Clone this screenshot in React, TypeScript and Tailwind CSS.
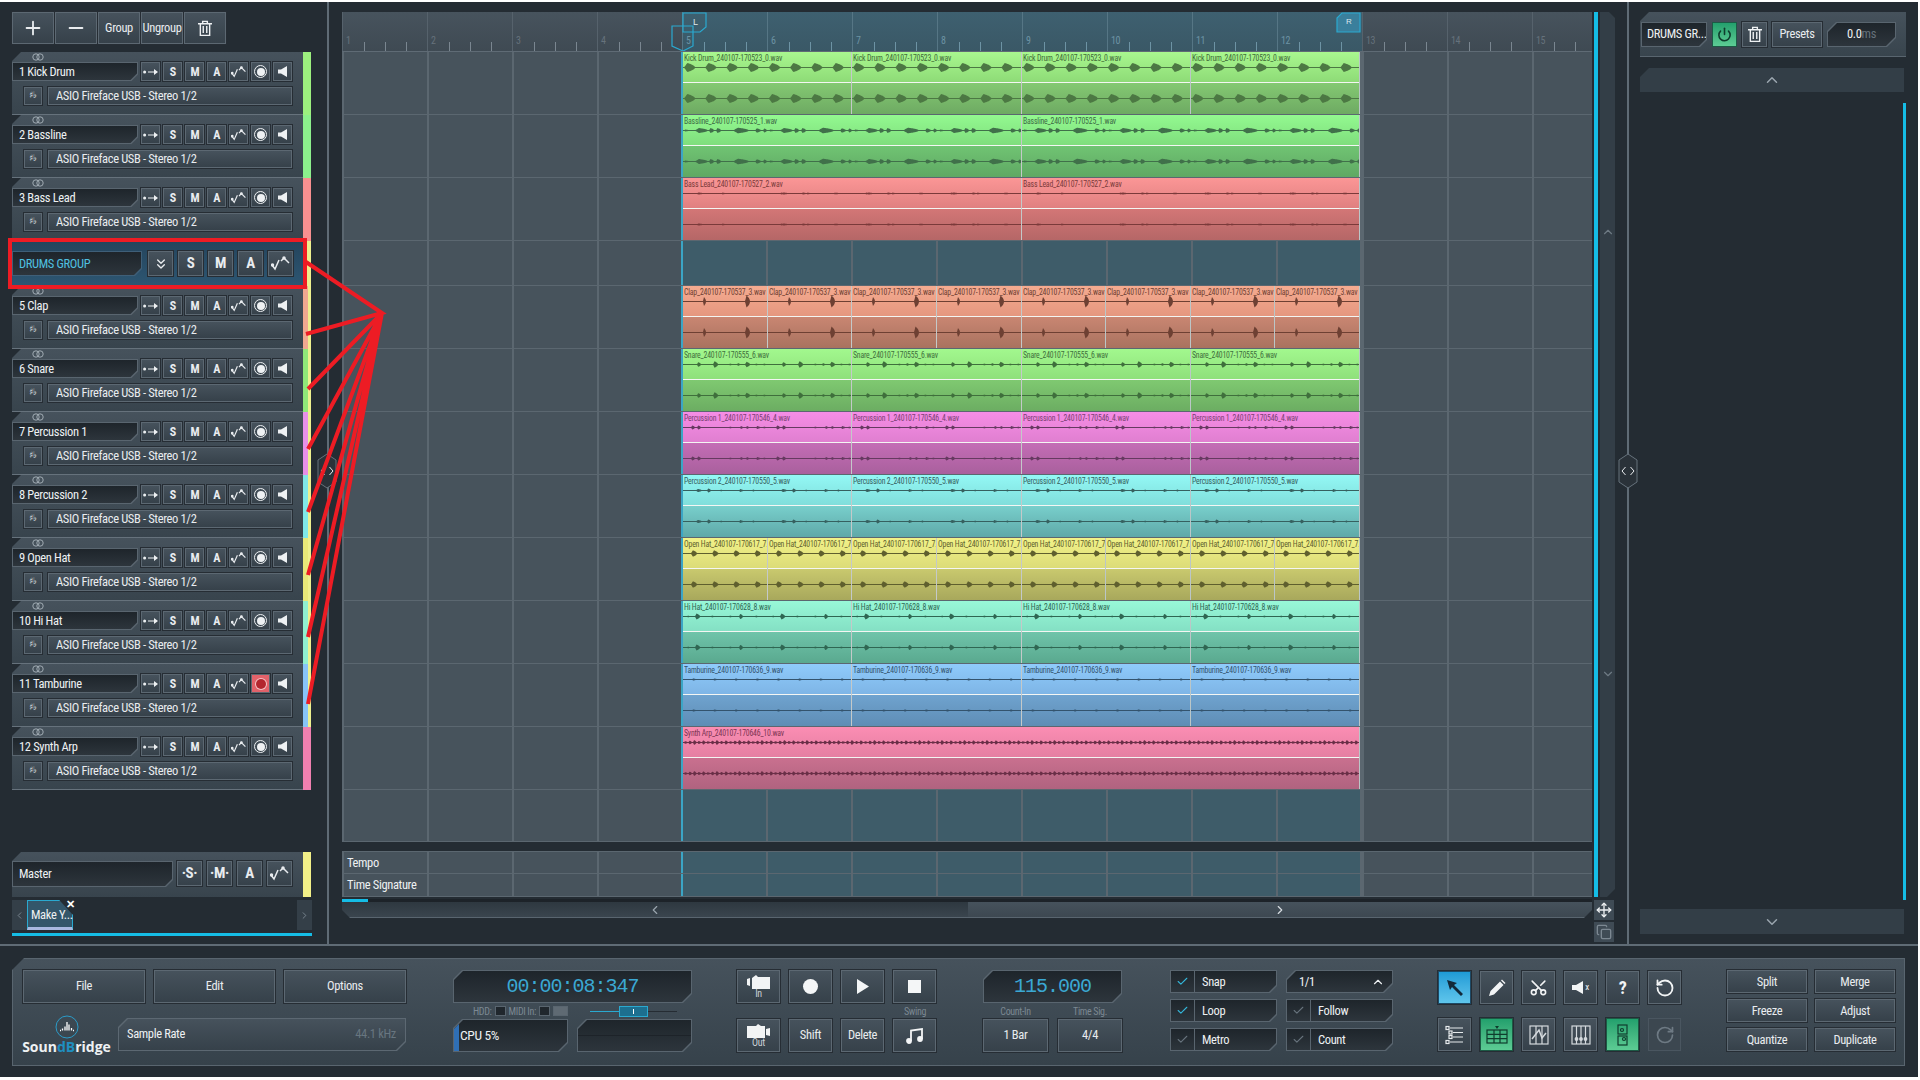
import { ReactNode } from "react";
import { Check, ChevronLeft, ChevronRight, ChevronUp, ChevronDown, ChevronsDown, Copy, Minus, Move, Plus, Power, RotateCcw, RotateCw, Scissors } from "lucide-react";

const CUT_BR = "[clip-path:polygon(0_0,100%_0,100%_calc(100%-7px),calc(100%-7px)_100%,0_100%)]";
const CUT_TL = "[clip-path:polygon(9px_0,100%_0,100%_100%,0_100%,0_9px)]";
const CUT_BOTH = "[clip-path:polygon(9px_0,100%_0,100%_calc(100%-9px),calc(100%-9px)_100%,0_100%,0_9px)]";
const GRID = "bg-[linear-gradient(to_right,#5b6770_2px,transparent_2px)] bg-[length:85px_100%]";
const BTN = "flex items-center justify-center border border-[#5c6872] bg-linear-to-b from-[#46525c] to-[#36414a] text-[#e9ecef] shadow-[0_0_0_1px_#262d34]";
const DARK = "bg-linear-to-b from-[#1e252b] to-[#2d353c]";

type Hit = [number, number, number];
type ClipSet = {
  name: string;
  count: number;
  period: number;
  hits: Hit[];
  wave: string;
  text: string;
  top: string;
  bottom: string;
};

function wavePath(width: number, cy: number, hits: Hit[], period: number) {
  const all: Hit[] = [];
  for (let k = 0; k * period < width; k++) {
    hits.forEach(([p, a, w]) => all.push([p + k * period, a, w]));
  }
  const up: string[] = [];
  const down: string[] = [];
  for (let x = 0; x <= width; x += 0.5) {
    let env = 0.45;
    all.forEach(([p, a, w]) => {
      const d = x - p;
      if (d < 0 || d > w) return;
      const peak = w * 0.3;
      const v = d < peak ? d / peak : Math.sqrt(1 - (d - peak) / (w - peak));
      env = Math.max(env, a * v);
    });
    up.push(`${x},${(cy - env).toFixed(2)}`);
    down.unshift(`${x},${(cy + env).toFixed(2)}`);
  }
  return `M${up.join("L")}L${down.join("L")}Z`;
}

function synthHits(): Hit[] {
  const out: Hit[] = [];
  for (let i = 0; i < 150; i++) {
    out.push([i * 4.5 + 1, 1.4 + ((i * 7) % 5) * 0.25, 3.5]);
  }
  return out;
}

const TRACK_CLIPS: (ClipSet | null)[] = [
  { name: "Kick Drum_240107-170523_0.wav", count: 4, period: 21.2, hits: [[1, 4.5, 11]], wave: "#4c7843", text: "text-[#3f6a38]", top: "from-[#a9f88f] to-[#8edb77]", bottom: "from-[#84c972] to-[#6eaa63]" },
  { name: "Bassline_240107-170525_1.wav", count: 2, period: 85, hits: [[1, 1, 5], [12, 2.5, 13], [26, 2.5, 5], [33, 2.5, 5], [50, 2.8, 16], [72, 2.2, 6], [80, 2, 4]], wave: "#40704a", text: "text-[#3d6b45]", top: "from-[#93f990] to-[#7fde7d]", bottom: "from-[#70c473] to-[#5fa863]" },
  { name: "Bass Lead_240107-170527_2.wav", count: 2, period: 85, hits: [[13, 1, 8], [38, 0.9, 5], [96, 0.9, 8], [118, 1, 6], [150, 0.9, 7]], wave: "#7a3a3a", text: "text-[#7a3a3a]", top: "from-[#fb9696] to-[#e08080]", bottom: "from-[#d37676] to-[#b56767]" },
  null,
  { name: "Clap_240107-170537_3.wav", count: 8, period: 85, hits: [[20, 4.5, 3], [62, 6, 5]], wave: "#6e4033", text: "text-[#6e4033]", top: "from-[#f5ab90] to-[#e5977f]", bottom: "from-[#c98672] to-[#a9725f]" },
  { name: "Snare_240107-170555_6.wav", count: 4, period: 85, hits: [[14, 2.3, 4], [30, 3.2, 5], [46, 1, 3], [54, 1.4, 3], [62, 2.8, 5], [72, 1, 3], [80, 1, 3]], wave: "#3f6f3c", text: "text-[#3f6f3c]", top: "from-[#a2f88e] to-[#8fe07b]", bottom: "from-[#7fc971] to-[#6cad62]" },
  { name: "Percussion 1_240107-170546_4.wav", count: 4, period: 85, hits: [[8, 2, 4], [14, 2, 4], [46, 1, 3], [57, 1.5, 3], [63, 1.5, 3], [73, 1.5, 4], [80, 1, 3]], wave: "#663a60", text: "text-[#7a3f72]", top: "from-[#f68de6] to-[#e07fd0]", bottom: "from-[#c46db6] to-[#a9609d]" },
  { name: "Percussion 2_240107-170550_5.wav", count: 4, period: 85, hits: [[13, 1.6, 6], [24, 2, 4], [37, 0.9, 3], [56, 1.5, 4], [69, 1.1, 3]], wave: "#36605f", text: "text-[#36605f]", top: "from-[#93f8f5] to-[#80dedb]", bottom: "from-[#78cfcc] to-[#5fa9a8]" },
  { name: "Open Hat_240107-170617_7.wav", count: 8, period: 21.2, hits: [[8, 3.2, 6]], wave: "#5f5f2e", text: "text-[#5f5f2e]", top: "from-[#f2f288] to-[#dcdc78]", bottom: "from-[#c9c96e] to-[#a8a85c]" },
  { name: "Hi Hat_240107-170628_8.wav", count: 4, period: 85, hits: [[4, 0.9, 3], [12, 3, 5], [28, 1, 3], [46, 1, 3], [56, 2.6, 4], [72, 1, 3]], wave: "#2f6652", text: "text-[#2f6652]", top: "from-[#98f8d8] to-[#84e0c4]", bottom: "from-[#6fc4aa] to-[#5aa98f]" },
  { name: "Tamburine_240107-170636_9.wav", count: 4, period: 21.2, hits: [[9, 1.1, 4]], wave: "#33536d", text: "text-[#33536d]", top: "from-[#8fcbfb] to-[#7eb5e6]", bottom: "from-[#6fa3cf] to-[#5f8db5]" },
  { name: "Synth Arp_240107-170646_10.wav", count: 1, period: 678, hits: synthHits(), wave: "#6a2f47", text: "text-[#7a3452]", top: "from-[#fb8db3] to-[#e57fa2]", bottom: "from-[#c9708f] to-[#b0637f]" },
];

const TRACKS = [
  { name: "1 Kick Drum", color: "bg-[#9cf07e]" },
  { name: "2 Bassline", color: "bg-[#8cf08c]" },
  { name: "3 Bass Lead", color: "bg-[#f89090]" },
  null,
  { name: "5 Clap", color: "bg-[#f0a890]", child: true },
  { name: "6 Snare", color: "bg-[#90e878]", child: true },
  { name: "7 Percussion 1", color: "bg-[#e890e8]", child: true },
  { name: "8 Percussion 2", color: "bg-[#80e8e8]", child: true },
  { name: "9 Open Hat", color: "bg-[#e8e878]", child: true },
  { name: "10 Hi Hat", color: "bg-[#90f0d0]", child: true },
  { name: "11 Tamburine", color: "bg-[#88c4f8]", child: true, armed: true },
  { name: "12 Synth Arp", color: "bg-[#f080b0]" },
];

function Cut({ cut, outer = "bg-[#59656f]", inner = DARK, className = "", children }: { cut: string; outer?: string; inner?: string; className?: string; children?: ReactNode }) {
  return (
    <div className={`${cut} ${outer} p-px ${className}`}>
      <div className={`${cut} ${inner} flex h-full w-full items-center`}>{children}</div>
    </div>
  );
}

function CurveIcon({ size = 16 }: { size?: number }) {
  return (
    <svg width={size} height={size * 0.75} viewBox="0 0 20 15" fill="none" stroke="#e9ecef" strokeWidth="1.5">
      <path d="M1 9l3 4 4-9" />
      <path d="M10 5l3-3 5 5" />
      <circle cx="1.5" cy="9" r="1" fill="#e9ecef" />
      <circle cx="13" cy="2" r="1" fill="#e9ecef" />
    </svg>
  );
}

function Trash({ size = 14 }: { size?: number }) {
  return (
    <svg width={size} height={size * 1.2} viewBox="0 0 12 14" fill="none" stroke="#eef1f3" strokeWidth="1.2">
      <path d="M0 3h12M4 3V1h4v2M2 3v10h8V3M4.5 5v6M7.5 5v6" />
    </svg>
  );
}

function LinkIcon() {
  return (
    <svg width="12" height="8" viewBox="0 0 12 8" fill="none" stroke="#aab4bc" strokeWidth="0.9">
      <circle cx="4" cy="4" r="3.2" />
      <circle cx="8" cy="4" r="3.2" />
    </svg>
  );
}

function SmallBtn({ children, className = "" }: { children: ReactNode; className?: string }) {
  return <div className={`${BTN} h-[19px] w-[19px] text-[12px] font-bold ${className}`}>{children}</div>;
}

function TrackHeader({ name, color, child, armed }: { name: string; color: string; child?: boolean; armed?: boolean }) {
  return (
    <div className="flex h-[63px]">
      <div className={`${CUT_TL} relative h-full w-[291px] border-b border-[#66727c] bg-linear-to-b from-[#46525c] to-[#38444d]`}>
        <div className="flex h-[10px] items-center pl-[20px]">
          <LinkIcon />
        </div>
        <div className="flex gap-[3px] pr-[11px]">
          <Cut cut={CUT_BR} className="h-[19px] w-[127px]">
            <span className="pl-[6px] pt-px text-[12.5px] text-[#eef1f3]">{name}</span>
          </Cut>
          <SmallBtn>
            <svg width="15" height="6" viewBox="0 0 15 6" fill="#eef1f3">
              <circle cx="1.6" cy="3" r="1.5" />
              <path d="M5 2.4h6V0l4 3-4 3V3.6H5z" />
            </svg>
          </SmallBtn>
          <SmallBtn>S</SmallBtn>
          <SmallBtn>M</SmallBtn>
          <SmallBtn>A</SmallBtn>
          <SmallBtn>
            <CurveIcon />
          </SmallBtn>
          {armed ? (
            <SmallBtn className="bg-none !bg-[#e2626a]">
              <span className="h-[10px] w-[10px] rounded-full bg-[#b3262e] ring-1 ring-[#f3c4c6]" />
            </SmallBtn>
          ) : (
            <SmallBtn>
              <span className="flex h-[13px] w-[13px] items-center justify-center rounded-full border border-[#eef1f3]">
                <span className="h-[8px] w-[8px] rounded-full bg-[#eef1f3]" />
              </span>
            </SmallBtn>
          )}
          <SmallBtn>
            <svg width="9" height="11" viewBox="0 0 9 11" fill="#eef1f3">
              <path d="M0 3.5h3L9 0v11L3 7.5H0z" />
            </svg>
          </SmallBtn>
        </div>
        <div className="mt-[6px] flex gap-[6px] pl-[12px] pr-[11px]">
          <div className={`${BTN} h-[18px] w-[18px] font-['DejaVu_Sans'] text-[9px] tracking-normal text-[#8f9aa3]`}>♯♭</div>
          <div className={`${BTN} h-[18px] flex-1 justify-start pl-[7px] text-[12.5px]`}>ASIO Fireface USB - Stereo 1/2</div>
        </div>
      </div>
      <div className="flex w-[8px]">
        <div className={`${color} h-full flex-1`} />
        {child && <div className="h-full w-[3px] bg-[#eef08e]" />}
      </div>
    </div>
  );
}

function GroupBtn({ children }: { children: ReactNode }) {
  return <div className={`${BTN} h-[25px] w-[25px] text-[15px] font-bold`}>{children}</div>;
}

function GroupHeader() {
  return (
    <div className="flex h-[45px]">
      <div className="h-full w-[291px] bg-linear-to-b from-[#24445c] to-[#2d5672] pt-[10px]">
        <div className="flex items-center gap-[6px]">
          <Cut cut={CUT_BR} outer="bg-[#3f5f78]" className="h-[25px] w-[130px]">
            <span className="pl-[6px] pt-px text-[12.5px] text-[#4fc0e0]">DRUMS GROUP</span>
          </Cut>
          <div className="flex gap-[5px]">
            <GroupBtn>
              <ChevronsDown size={16} />
            </GroupBtn>
            <GroupBtn>S</GroupBtn>
            <GroupBtn>M</GroupBtn>
            <GroupBtn>A</GroupBtn>
            <GroupBtn>
              <CurveIcon size={20} />
            </GroupBtn>
          </div>
        </div>
      </div>
      <div className="h-full w-[8px] bg-[#eef08e]" />
    </div>
  );
}

function Clip({ set, width }: { set: ClipSet; width: number }) {
  return (
    <div className="relative h-full min-w-0 flex-1 overflow-hidden border-r border-[#f1f3f0]/70">
      <div className={`h-[31px] border-b border-[#f4f6f3] bg-linear-to-b ${set.top}`} />
      <div className={`h-[31px] bg-linear-to-b ${set.bottom}`} />
      <svg className="absolute inset-0" width={width} height={62}>
        <path d={wavePath(width, 15.5, set.hits, set.period)} fill={set.wave} />
        <path d={wavePath(width, 46.5, set.hits, set.period)} fill={set.wave} />
      </svg>
      <div className={`absolute left-px top-px origin-left scale-x-[0.86] whitespace-nowrap text-[9px] leading-[10px] tracking-[-0.2px] ${set.text}`}>{set.name}</div>
    </div>
  );
}

function Lane({ height, label, clips }: { height: string; label?: string; clips?: ClipSet | null }) {
  return (
    <div className={`flex ${height} border-b border-[#5b6770]`}>
      <div className={`flex w-[339px] items-center bg-[#47535c] pl-[5px] pt-px text-[12.5px] text-[#eef1f3] ${GRID}`}>{label}</div>
      <div className={`flex w-[679px] border-l-2 border-[#3ba5c5] bg-[#3e5c69] bg-origin-border ${GRID}`}>
        {clips && Array.from({ length: clips.count }).map((_, i) => <Clip key={i} set={clips} width={677 / clips.count} />)}
      </div>
      <div className={`flex-1 border-l-2 border-[#5b6770] bg-[#47535c] ${GRID}`} />
    </div>
  );
}

function Ruler() {
  return (
    <div className="relative flex h-[40px] overflow-hidden border-b border-[#5f6b75]">
      {Array.from({ length: 15 }).map((_, i) => {
        const inLoop = i >= 4 && i < 12;
        return (
          <div key={i} className={`relative flex h-full w-[85px] shrink-0 border-l ${inLoop ? "border-[#567685] bg-linear-to-b from-[#3e6070] to-[#3a5866]" : "border-[#56626c] bg-linear-to-b from-[#47535d] to-[#3f4a53]"}`}>
            <span className={`absolute bottom-[3px] left-[3px] text-[10px] ${inLoop ? "text-[#6d93a4]" : "text-[#66727c]"}`}>{i + 1}</span>
            <div className="mt-auto flex w-full pl-[21px]">
              {[0, 1, 2].map((t) => (
                <div key={t} className={`h-[9px] w-[21px] border-l ${inLoop ? "border-[#6d93a4]" : "border-[#7a8690]"}`} />
              ))}
            </div>
          </div>
        );
      })}
      <svg className="absolute left-[329px] top-0" width="36" height="40" fill="none" stroke="#2aa9d0" strokeWidth="1.2">
        <path d="M12 1h23v14l-6 5H12z" />
        <path d="M1 14h21v20l-10 5-11-5z" />
        <text x="22" y="13" fill="#dfe8ec" stroke="none" fontSize="9" fontFamily="Liberation Sans">L</text>
      </svg>
      <svg className="absolute left-[994px] top-0" width="25" height="22" fill="#3a7f9c" stroke="#2aa9d0" strokeWidth="1.2">
        <path d="M6 1h18v19H1V6z" />
        <text x="10" y="12" fill="#dfe8ec" stroke="none" fontSize="8" fontFamily="Liberation Sans">R</text>
      </svg>
    </div>
  );
}

function MainBtn({ children, className = "" }: { children: ReactNode; className?: string }) {
  return <div className={`${BTN} text-[12.5px] ${className}`}>{children}</div>;
}

function Display({ children }: { children: ReactNode }) {
  return (
    <Cut cut={CUT_BOTH} className="h-[33px] w-full">
      <div className="flex w-full items-center justify-center font-['Liberation_Mono'] text-[20px] tracking-[-1px] text-[#3ba8d3] [font-stretch:100%]">{children}</div>
    </Cut>
  );
}

function CheckRow({ label, on }: { label: string; on?: boolean }) {
  return (
    <Cut cut={CUT_BR} className="h-[23px] w-[107px]">
      <div className="flex h-full w-[24px] items-center justify-center border-r border-[#59656f]">
        <Check size={13} className={on ? "text-[#33b5d8]" : "text-[#66727c]"} />
      </div>
      <span className="pl-[7px] pt-px text-[12.5px] text-[#eef1f3]">{label}</span>
    </Cut>
  );
}

function ToolBtn({ children, tone = "plain" }: { children: ReactNode; tone?: "plain" | "blue" | "green" }) {
  const look = tone === "blue"
    ? "border-[#1d4a66] bg-linear-to-b from-[#1d9bd6] to-[#5fc6ec]"
    : tone === "green"
      ? "border-[#1c5a45] bg-linear-to-b from-[#22a06d] to-[#5ccc94]"
      : "border-[#5c6872] bg-linear-to-b from-[#46525c] to-[#36414a]";
  return <div className={`flex h-[33px] w-[33px] items-center justify-center border shadow-[0_0_0_1px_#262d34] ${look}`}>{children}</div>;
}

function BottomPanel() {
  return (
    <div className="ml-[12px] mt-[12px] flex h-[108px] w-[1893px] border border-[#59656f] bg-linear-to-b from-[#46525c] to-[#36424b] pl-[10px] pt-[11px] [clip-path:polygon(12px_0,100%_0,100%_100%,0_100%,0_12px)]">
      <div className="w-[383px]">
        <div className="flex gap-[9px]">
          <MainBtn className="h-[33px] w-[122px]">File</MainBtn>
          <MainBtn className="h-[33px] w-[121px]">Edit</MainBtn>
          <MainBtn className="h-[33px] w-[122px]">Options</MainBtn>
        </div>
        <div className="mt-[15px] flex items-start">
          <div className="-mt-[3px] flex w-[87px] flex-col items-center">
            <svg width="24" height="24" viewBox="0 0 24 24" fill="none">
              <circle cx="12" cy="12" r="11" stroke="#2b9bc8" strokeWidth="1" />
              <path d="M5 15.5h1M7.5 15.5v-2M10 15.5v-4M12 15.5V7M14 15.5v-6M16.5 15.5v-2.500M19 15.5h-1" stroke="#fff" strokeWidth="1.300" />
            </svg>
            <div className="font-['Open_Sans'] text-[14px] font-bold leading-[16px] tracking-normal text-[#eef1f3] [font-stretch:100%]">
              Soun<span className="text-[#1f8fc0]">dB</span>ridge
            </div>
          </div>
          <Cut cut={CUT_BOTH} outer="bg-[#5c6872]" inner="bg-linear-to-b from-[#46525c] to-[#36414a]" className="ml-[8px] h-[33px] flex-1">
            <span className="pl-[8px] text-[12.5px] text-[#eef1f3]">Sample Rate</span>
            <span className="ml-auto pr-[9px] text-[12.5px] text-[#687680]">44.1 kHz</span>
          </Cut>
        </div>
      </div>
      <div className="ml-[47px] w-[239px]">
        <Display>00:00:08:347</Display>
        <div className="flex h-[16px] items-center text-[10px] text-[#7c8892]">
          <div className="flex w-[115px] items-center justify-end gap-[3px]">
            <span>HDD:</span>
            <span className="h-[10px] w-[11px] border border-[#59656f] bg-[#20272d]" />
            <span>MIDI In:</span>
            <span className="h-[10px] w-[11px] border border-[#59656f] bg-[#20272d]" />
            <span className="h-[10px] w-[15px] border border-[#59656f] bg-[#5f6a73]" />
          </div>
          <div className="ml-[22px] flex w-[87px] items-center">
            <span className="h-px w-[29px] bg-[#2aa9d0]" />
            <span className="flex h-[11px] w-[29px] items-center justify-center border border-[#2aa9d0] bg-[#1d6f8f]">
              <span className="h-[5px] w-px bg-white" />
            </span>
            <span className="h-px flex-1 bg-[#252c33]" />
          </div>
        </div>
        <div className="flex gap-[9px]">
          <Cut cut={CUT_BOTH} className="h-[33px] w-[115px]">
            <span className="h-full w-[5px] bg-[#2f6fb5]" />
            <span className="pl-[1px] text-[13.5px] text-[#eef1f3]">CPU 5%</span>
          </Cut>
          <Cut cut={CUT_BOTH} className="h-[33px] w-[115px]">
            <span className="h-px w-full bg-[#1d2329]" />
          </Cut>
        </div>
      </div>
      <div className="ml-[45px] w-[199px]">
        <div className="flex gap-[9px]">
          <MainBtn className="h-[33px] w-[43px] flex-col">
            <svg width="23" height="14" viewBox="0 0 23 14" fill="#f2f4f5">
              <path d="M0 4l3-1v8l-3-1zM5 3l4-3 2 2h12v12H5z" />
            </svg>
            <span className="text-[10px] leading-[10px] text-[#c9d0d5]">In</span>
          </MainBtn>
          <MainBtn className="h-[33px] w-[43px]">
            <span className="h-[15px] w-[15px] rounded-full bg-[#f4f6f7]" />
          </MainBtn>
          <MainBtn className="h-[33px] w-[43px]">
            <svg width="12" height="15" viewBox="0 0 12 15" fill="#f4f6f7">
              <path d="M0 0l12 7.500L0 15z" />
            </svg>
          </MainBtn>
          <MainBtn className="h-[33px] w-[43px]">
            <span className="h-[13px] w-[13px] bg-[#f4f6f7]" />
          </MainBtn>
        </div>
        <div className="flex h-[16px] items-center justify-end pr-[10px] text-[10px] text-[#7c8892]">Swing</div>
        <div className="flex gap-[9px]">
          <MainBtn className="h-[33px] w-[43px] flex-col">
            <svg width="23" height="14" viewBox="0 0 23 14" fill="#f2f4f5">
              <path d="M0 2h9l2-2 3 2h4v12H0zM19 5l4-1v8l-4-1z" />
            </svg>
            <span className="text-[10px] leading-[10px] text-[#c9d0d5]">Out</span>
          </MainBtn>
          <MainBtn className="h-[33px] w-[43px]">Shift</MainBtn>
          <MainBtn className="h-[33px] w-[43px]">Delete</MainBtn>
          <MainBtn className="h-[33px] w-[43px]">
            <svg width="18" height="16" viewBox="0 0 18 16" fill="none" stroke="#f4f6f7" strokeWidth="1.800">
              <path d="M5 13V2.500L16 1v10" />
              <circle cx="3" cy="13" r="2" fill="#f4f6f7" />
              <circle cx="14" cy="11" r="2" fill="#f4f6f7" />
            </svg>
          </MainBtn>
        </div>
      </div>
      <div className="ml-[47px] w-[139px]">
        <Display>115.000</Display>
        <div className="flex h-[16px] items-center text-center text-[10px] text-[#7c8892]">
          <span className="w-[65px]">Count-In</span>
          <span className="ml-[10px] w-[64px]">Time Sig.</span>
        </div>
        <div className="flex gap-[10px]">
          <MainBtn className="h-[33px] w-[65px]">1 Bar</MainBtn>
          <MainBtn className="h-[33px] w-[64px]">4/4</MainBtn>
        </div>
      </div>
      <div className="ml-[48px] flex w-[223px] gap-[9px]">
        <div className="flex flex-col gap-[6px]">
          <CheckRow label="Snap" on />
          <CheckRow label="Loop" on />
          <CheckRow label="Metro" />
        </div>
        <div className="flex flex-col gap-[6px]">
          <Cut cut={CUT_BOTH} className="h-[23px] w-[107px]">
            <span className="pl-[12px] pt-px text-[12.5px] text-[#eef1f3]">1/1</span>
            <ChevronUp size={14} className="ml-auto mr-[7px] text-[#eef1f3]" />
          </Cut>
          <CheckRow label="Follow" />
          <CheckRow label="Count" />
        </div>
      </div>
      <div className="ml-[45px] grid h-[81px] w-[243px] grid-cols-6 content-between gap-x-[9px] pt-px">
        <ToolBtn tone="blue">
          <svg width="18" height="18" viewBox="0 0 18 18" fill="#12293a">
            <path d="M1 1l10 3-3 2 9 9-2 2-9-9-2 3z" />
          </svg>
        </ToolBtn>
        <ToolBtn>
          <svg width="18" height="18" viewBox="0 0 18 18" fill="#f2f4f5">
            <path d="M1 17l1.500-5L12 2.500 15.500 6 6 15.500zM13 1.500l1-1L17.500 4l-1 1z" />
          </svg>
        </ToolBtn>
        <ToolBtn>
          <Scissors size={19} className="-rotate-90 text-[#f2f4f5]" />
        </ToolBtn>
        <ToolBtn>
          <span className="flex items-center gap-[2px]">
            <svg width="11" height="13" viewBox="0 0 11 13" fill="#f2f4f5">
              <path d="M0 4h4L11 0v13L4 9H0z" />
            </svg>
            <span className="text-[9px] text-[#f2f4f5]">x</span>
          </span>
        </ToolBtn>
        <ToolBtn>
          <span className="text-[18px] font-bold leading-none text-[#f2f4f5]">?</span>
        </ToolBtn>
        <ToolBtn>
          <RotateCcw size={20} strokeWidth={2.200} className="text-[#f2f4f5]" />
        </ToolBtn>
        <ToolBtn>
          <svg width="20" height="20" viewBox="0 0 20 20" fill="none" stroke="#e6eaec" strokeWidth="1.200">
            <path d="M5 3h13M8 7.500h10M8 12h10M5 17h13" />
            <rect x="1" y="1.500" width="3" height="3" />
            <rect x="4" y="6" width="3" height="3" />
            <rect x="4" y="10.500" width="3" height="3" />
            <rect x="1" y="15.500" width="3" height="3" />
          </svg>
        </ToolBtn>
        <ToolBtn tone="green">
          <svg width="22" height="18" viewBox="0 0 22 18" fill="none" stroke="#0f3d2d" strokeWidth="1.200">
            <rect x="1" y="4" width="20" height="13" />
            <path d="M1 8.300h20M1 12.600h20M8 4v13M14 4v13" />
            <path d="M9 0h4l-2 3z" fill="#0f3d2d" stroke="none" />
          </svg>
        </ToolBtn>
        <ToolBtn>
          <svg width="20" height="20" viewBox="0 0 20 20" fill="none" stroke="#d4d9dd" strokeWidth="1.200">
            <rect x="1" y="1" width="18" height="18" />
            <path d="M7 1v18M13 1v18" />
            <path d="M3 14l7-9 3 8 4-5" strokeWidth="1.500" />
          </svg>
        </ToolBtn>
        <ToolBtn>
          <svg width="20" height="20" viewBox="0 0 20 20" fill="#d4d9dd" stroke="#d4d9dd" strokeWidth="1.200">
            <rect x="1" y="1" width="18" height="18" fill="none" />
            <path d="M5.500 1v18M10 1v18M14.500 1v18" />
            <circle cx="5.500" cy="14" r="1.300" />
            <circle cx="10" cy="14" r="1.300" />
            <circle cx="14.500" cy="14" r="1.300" />
          </svg>
        </ToolBtn>
        <ToolBtn tone="green">
          <svg width="12" height="22" viewBox="0 0 12 22" fill="none" stroke="#0f3d2d" strokeWidth="1.200">
            <rect x="1" y="1" width="9" height="9" />
            <rect x="1" y="12" width="9" height="9" />
            <circle cx="5" cy="6" r="1.500" />
            <circle cx="7" cy="15" r="1.500" />
          </svg>
        </ToolBtn>
        <div className="flex h-[33px] w-[33px] items-center justify-center border border-[#4a5660] bg-[#3c4750]">
          <RotateCw size={20} className="text-[#6e7a84]" />
        </div>
      </div>
      <div className="ml-[46px] grid h-[81px] w-[168px] grid-cols-2 content-between gap-x-[8px]">
        {["Split", "Merge", "Freeze", "Adjust", "Quantize", "Duplicate"].map((t) => (
          <MainBtn key={t} className="h-[23px] pt-px">
            {t}
          </MainBtn>
        ))}
      </div>
    </div>
  );
}

function Handle({ className }: { className: string }) {
  return (
    <svg className={`absolute ${className}`} width="20" height="36" viewBox="0 0 20 36" fill="#2a3239" stroke="#66727c">
      <path d="M10 1l9 6v22l-9 6-9-6V7z" />
      <path d="M7.500 14l-3.500 4 3.500 4M12.500 14l3.500 4-3.500 4" fill="none" stroke="#e9ecef" />
    </svg>
  );
}

export default function App() {
  return (
    <div className="relative h-[1080px] w-[1920px] overflow-hidden border-b-[3px] border-r-2 border-t-2 border-white bg-[#242c33] font-['Roboto_Condensed','Open_Sans','Liberation_Sans',sans-serif] tracking-[-0.35px] [font-stretch:75%]">
      <div className="flex h-[944px] border-b-2 border-[#5f6b75]">
        <div className="flex w-[327px] shrink-0 flex-col pb-[8px] pl-[12px] pr-[15px] pt-[10px]">
          <div className="flex w-[215px] gap-px">
            <MainBtn className="h-[32px] w-[42px]">
              <Plus size={22} />
            </MainBtn>
            <MainBtn className="h-[32px] w-[42px]">
              <Minus size={22} />
            </MainBtn>
            <MainBtn className="h-[32px] w-[42px]">Group</MainBtn>
            <MainBtn className="h-[32px] w-[42px]">Ungroup</MainBtn>
            <MainBtn className="h-[32px] w-[42px]">
              <Trash />
            </MainBtn>
          </div>
          <div className="mt-[8px] flex flex-col">
            {TRACKS.map((t, i) => (t ? <TrackHeader key={i} {...t} /> : <GroupHeader key={i} />))}
          </div>
          <div className="mt-auto flex h-[45px]">
            <div className={`${CUT_TL} flex h-full w-[291px] gap-[4px] bg-linear-to-b from-[#46525c] to-[#38444d] pt-[9px]`}>
              <Cut cut={CUT_BR} className="h-[26px] w-[161px]">
                <span className="pl-[6px] pt-px text-[12.5px] text-[#eef1f3]">Master</span>
              </Cut>
              <div className="flex gap-[5px]">
                <GroupBtn>·S·</GroupBtn>
                <GroupBtn>·M·</GroupBtn>
                <GroupBtn>A</GroupBtn>
                <GroupBtn>
                  <CurveIcon size={20} />
                </GroupBtn>
              </div>
            </div>
            <div className="h-full w-[8px] bg-[#f2f088]" />
          </div>
          <div className="mt-[3px] flex h-[30px] items-stretch">
            <div className="flex w-[15px] items-center justify-center bg-[#343f48]">
              <ChevronLeft size={11} className="text-[#7c8892]" />
            </div>
            <div className="relative w-[46px] whitespace-nowrap border border-[#2aa9d0] border-b-[3px] border-b-[#a8b8e0] bg-[#33566a] pl-[3px] pt-[5px] text-[12.5px] text-[#eef1f3] [clip-path:polygon(0_0,70%_0,100%_50%,100%_100%,0_100%)]">
              Make Y...
            </div>
            <span className="ml-[-7px] mt-[-1px] text-[11px] font-bold leading-[12px] text-white">✕</span>
            <div className="ml-auto flex w-[15px] items-center justify-center bg-[#343f48]">
              <ChevronRight size={11} className="text-[#7c8892]" />
            </div>
          </div>
          <div className="mt-[3px] h-[3px] bg-[#15bde6]" />
        </div>
        <div className="w-[2px] shrink-0 bg-[#5f6b75]" />
        <div className="flex w-[1298px] shrink-0 pl-[13px] pt-[10px]">
          <div className="w-[1250px] shrink-0">
            <Ruler />
            {TRACK_CLIPS.map((c, i) => (
              <Lane key={i} height={c === null ? "h-[45px]" : "h-[63px]"} clips={c} />
            ))}
            <Lane height="h-[52px]" />
            <div className="mt-[9px] border-t border-[#5b6770]">
              <Lane height="h-[22px]" label="Tempo" />
              <Lane height="h-[23px]" label="Time Signature" />
            </div>
            <div className="mt-[2px] h-[3px] bg-[#1d2329]">
              <div className="h-full w-[26px] bg-[#15bde6]" />
            </div>
            <div className="flex h-[16px]">
              <div className="flex w-[626px] items-center justify-center border-b border-[#59656f] bg-linear-to-b from-[#2e3840] to-[#3a454e] [clip-path:polygon(0_0,100%_0,100%_100%,8px_100%,0_8px)]">
                <ChevronLeft size={14} className="text-[#9aa5ae]" />
              </div>
              <div className="flex flex-1 items-center justify-center border-b border-[#59656f] bg-linear-to-b from-[#46525c] to-[#3d4851] [clip-path:polygon(0_0,100%_0,100%_8px,calc(100%-8px)_100%,0_100%)]">
                <ChevronRight size={14} className="text-[#d6dce0]" />
              </div>
            </div>
          </div>
          <div className="ml-[2px] w-[21px]">
            <div className="flex h-[885px] gap-[2px]">
              <div className="h-full w-[4px] bg-[#15bde6]" />
              <div className="flex h-full w-[15px] flex-col items-center gap-[428px] bg-[#333e47] pt-[213px] [clip-path:polygon(0_0,calc(100%-6px)_0,100%_6px,100%_calc(100%-8px),calc(100%-8px)_100%,0_100%)]">
                <ChevronUp size={14} className="text-[#6e7a84]" />
                <ChevronDown size={14} className="text-[#6e7a84]" />
              </div>
            </div>
            <div className="mt-[3px] flex h-[20px] w-[20px] items-center justify-center bg-[#3f4b55]">
              <Move size={16} className="text-[#eef1f3]" />
            </div>
            <div className="mt-[2px] flex h-[20px] w-[20px] items-center justify-center bg-[#3f4b55]">
              <Copy size={16} className="text-[#7c8892]" />
            </div>
          </div>
        </div>
        <div className="w-[2px] shrink-0 bg-[#5f6b75]" />
        <div className="flex flex-1 flex-col pl-[11px] pr-[12px] pt-[10px]">
          <div className={`${CUT_TL} flex h-[45px] w-[266px] items-start gap-[5px] border-b border-[#59656f] bg-linear-to-b from-[#46525c] to-[#38444d] pl-px pt-[10px]`}>
            <Cut cut={CUT_BR} className="h-[25px] w-[66px]">
              <span className="whitespace-nowrap pl-[5px] text-[12.5px] text-[#eef1f3]">DRUMS GR...</span>
            </Cut>
            <div className="flex h-[25px] w-[25px] items-center justify-center border border-[#1c5a45] bg-linear-to-b from-[#22a06d] to-[#5ccc94]">
              <Power size={15} strokeWidth={2.500} className="text-[#0f3d2d]" />
            </div>
            <GroupBtn>
              <Trash />
            </GroupBtn>
            <MainBtn className="h-[25px] w-[50px]">Presets</MainBtn>
            <Cut cut={CUT_BOTH} className="h-[25px] w-[69px]">
              <span className="w-full text-center text-[12.5px] text-[#eef1f3]">
                0.0<span className="text-[#66727c]">ms</span>
              </span>
            </Cut>
          </div>
          <div className={`${CUT_TL} mt-[11px] flex h-[24px] w-[264px] items-center justify-center bg-[#333e47]`}>
            <ChevronUp size={18} className="text-[#9aa5ae]" />
          </div>
          <div className="ml-auto mt-[11px] h-[797px] w-[3px] bg-[#15bde6]" />
          <div className="mt-[9px] flex h-[25px] w-[264px] items-center justify-center bg-[#333e47]">
            <ChevronDown size={18} className="text-[#9aa5ae]" />
          </div>
        </div>
      </div>
      <BottomPanel />
      <Handle className="left-[317px] top-[451px]" />
      <Handle className="left-[1618px] top-[451px]" />
      <svg className="absolute left-0 top-[-2px]" width="1920" height="1080" fill="none" stroke="#ed1c24" strokeWidth="4">
        <rect x="10" y="240" width="295" height="47" />
        <path d="M306 262L382 313L306 334M382 313L308 389M382 313L308 449M382 313L308 512M382 313L308 575M382 313L308 637M382 313L308 704" />
      </svg>
    </div>
  );
}
